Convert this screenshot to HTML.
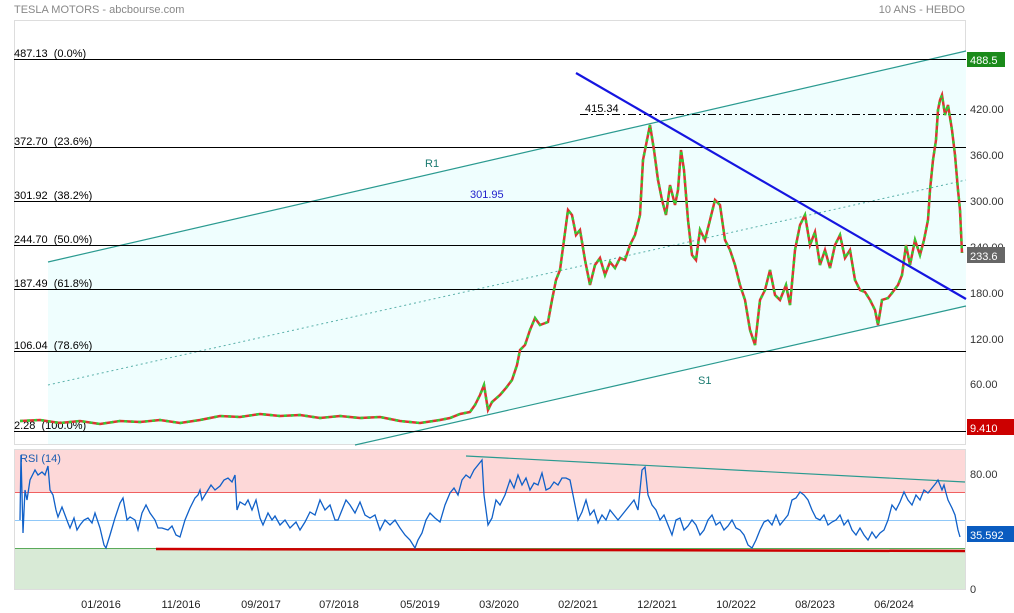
<!DOCTYPE html>
<html><head><meta charset="utf-8"><style>
body{margin:0;background:#fff;width:1014px;height:613px;overflow:hidden;font-family:"Liberation Sans",sans-serif}
svg{position:absolute;left:0;top:0}
text{font-family:"Liberation Sans",sans-serif;font-size:11px;white-space:pre}
</style></head><body>
<svg width="1014" height="613" viewBox="0 0 1014 613" xml:space="preserve">
<text x="14" y="13" fill="#888" font-size="12">TESLA MOTORS - abcbourse.com</text>
<text x="965" y="13" fill="#888" font-size="12" text-anchor="end">10 ANS - HEBDO</text>
<rect x="14.5" y="20.5" width="951" height="424" fill="#fff" stroke="#ddd"/>
<polygon points="48,262 966,51 966,306 355,444 48,444" fill="#effefe"/>
<line x1="48" y1="262" x2="966" y2="51" stroke="#2a9a90" stroke-width="1.2"/>
<line x1="355" y1="445" x2="966" y2="306" stroke="#2a9a90" stroke-width="1.2"/>
<line x1="48" y1="385" x2="966" y2="180" stroke="#5ab0aa" stroke-width="1" stroke-dasharray="2,3"/>
<g stroke="#000" stroke-width="1">
<line x1="14" y1="59.5" x2="966" y2="59.5"/>
<line x1="14" y1="147.5" x2="966" y2="147.5"/>
<line x1="14" y1="201.5" x2="966" y2="201.5"/>
<line x1="14" y1="245.5" x2="966" y2="245.5"/>
<line x1="14" y1="289.5" x2="966" y2="289.5"/>
<line x1="14" y1="351.5" x2="966" y2="351.5"/>
<line x1="14" y1="431.5" x2="966" y2="431.5"/>
<line x1="580" y1="114.5" x2="966" y2="114.5" stroke-dasharray="8,3,2,3"/>
</g>
<g fill="#000">
<text x="14" y="57">487.13  (0.0%)</text>
<text x="14" y="145">372.70  (23.6%)</text>
<text x="14" y="199">301.92  (38.2%)</text>
<text x="14" y="243">244.70  (50.0%)</text>
<text x="14" y="287">187.49  (61.8%)</text>
<text x="14" y="349">106.04  (78.6%)</text>
<text x="14" y="429">2.28  (100.0%)</text>
<text x="585" y="112">415.34</text>
</g>
<text x="425" y="167" fill="#1a7a70" font-size="13">R1</text>
<text x="698" y="384" fill="#1a7a70" font-size="13">S1</text>
<text x="470" y="198" fill="#2222cc">301.95</text>
<polyline fill="none" stroke="#d33" stroke-width="2.5" points="20,421 40,420 60,423 80,421 100,424 120,421 140,422 160,420 180,423 200,420 220,416 240,417 260,414 280,416 300,415 320,418 340,416 360,418 380,417 400,421 420,423 440,420 450,418 460,414 470,412 475,405 480,395 484,385 488,410 492,402 500,395 506,388 512,380 517,365 520,350 525,345 530,330 535,318 540,325 548,322 552,300 556,280 560,270 564,240 568,210 572,215 576,235 580,230 585,260 590,285 595,265 600,258 605,275 610,262 615,268 620,258 625,260 630,245 635,235 640,215 643,160 646,145 650,125 654,150 658,180 662,200 666,215 670,185 675,205 678,190 681,150 684,170 688,220 692,255 696,260 700,230 705,240 710,220 715,200 720,205 725,240 730,250 735,265 740,285 745,300 750,330 755,345 760,300 765,290 770,270 775,295 780,300 786,285 790,305 795,250 800,225 805,215 810,245 815,232 820,265 825,250 830,268 835,245 840,235 845,258 850,250 855,280 860,290 865,292 870,300 875,310 878,325 882,300 888,298 892,293 898,285 902,275 906,245 910,265 915,240 920,255 924,240 928,220 930,190 933,160 936,140 938,110 940,100 942,95 945,115 948,105 952,130 955,155 958,190 960,210 962,253"/>
<polyline fill="none" stroke="#3c3" stroke-width="2.5" stroke-dasharray="3,4" points="20,421 40,420 60,423 80,421 100,424 120,421 140,422 160,420 180,423 200,420 220,416 240,417 260,414 280,416 300,415 320,418 340,416 360,418 380,417 400,421 420,423 440,420 450,418 460,414 470,412 475,405 480,395 484,385 488,410 492,402 500,395 506,388 512,380 517,365 520,350 525,345 530,330 535,318 540,325 548,322 552,300 556,280 560,270 564,240 568,210 572,215 576,235 580,230 585,260 590,285 595,265 600,258 605,275 610,262 615,268 620,258 625,260 630,245 635,235 640,215 643,160 646,145 650,125 654,150 658,180 662,200 666,215 670,185 675,205 678,190 681,150 684,170 688,220 692,255 696,260 700,230 705,240 710,220 715,200 720,205 725,240 730,250 735,265 740,285 745,300 750,330 755,345 760,300 765,290 770,270 775,295 780,300 786,285 790,305 795,250 800,225 805,215 810,245 815,232 820,265 825,250 830,268 835,245 840,235 845,258 850,250 855,280 860,290 865,292 870,300 875,310 878,325 882,300 888,298 892,293 898,285 902,275 906,245 910,265 915,240 920,255 924,240 928,220 930,190 933,160 936,140 938,110 940,100 942,95 945,115 948,105 952,130 955,155 958,190 960,210 962,253"/>
<line x1="576" y1="73" x2="966" y2="299" stroke="#1515e0" stroke-width="2.2"/>
<g fill="#333" font-size="11">
<text x="970" y="113">420.00</text><text x="970" y="159">360.00</text><text x="970" y="205">300.00</text>
<text x="970" y="251">240.00</text><text x="970" y="297">180.00</text><text x="970" y="343">120.00</text><text x="970" y="388">60.00</text>
<text x="970" y="478">80.00</text><text x="970" y="593">0</text>
</g>
<rect x="967" y="52" width="38" height="15" fill="#1a8a1a"/><text x="970" y="64" fill="#fff" font-size="12">488.5</text>
<rect x="967" y="247" width="38" height="16" fill="#666"/><text x="970" y="260" fill="#fff" font-size="12">233.6</text>
<rect x="967" y="419" width="48" height="16" fill="#c00"/><text x="970" y="432" fill="#fff" font-size="12">9.410</text>
<rect x="967" y="526" width="48" height="16" fill="#0a5cc0"/><text x="970" y="539" fill="#fff" font-size="12">35.592</text>
<rect x="14.5" y="449.5" width="951" height="140" fill="#fff" stroke="#ddd"/>
<rect x="15" y="450" width="950" height="42" fill="#fdd8d8"/>
<rect x="15" y="548" width="950" height="41" fill="#d8ead6"/>
<line x1="15" y1="492.5" x2="965" y2="492.5" stroke="#f06060"/>
<line x1="15" y1="520.5" x2="965" y2="520.5" stroke="#90c8f8"/>
<line x1="15" y1="548.5" x2="965" y2="548.5" stroke="#5aaa5a"/>
<line x1="156" y1="549" x2="965" y2="551" stroke="#c00" stroke-width="2.5"/>
<line x1="466" y1="456" x2="965" y2="482" stroke="#2a9a90" stroke-width="1.2"/>
<text x="20" y="462" fill="#1a5cb0" font-size="12">RSI (14)</text>
<polyline fill="none" stroke="#1060c8" stroke-width="1.3" points="20,520 21,455 23,533 25,490 27,500 30,480 35,470 38,475 42,472 45,475 48,466 50,490 53,495 56,510 58,517 62,507 65,515 68,523 70,528 74,518 77,530 80,525 84,520 88,518 92,523 95,513 100,528 104,545 106,548 110,535 115,518 120,503 123,498 127,520 130,517 135,520 138,530 142,513 146,505 150,513 155,520 158,528 162,528 168,530 172,526 176,535 180,537 185,520 190,508 195,498 198,495 200,490 202,500 205,495 208,490 211,485 215,490 220,486 224,480 228,478 232,482 235,475 237,510 240,502 245,505 248,500 252,510 256,500 260,518 263,525 268,513 272,520 275,516 280,525 285,520 290,528 296,522 300,530 305,522 310,512 315,515 320,500 325,510 330,505 335,520 338,520 342,510 346,500 350,505 355,513 360,502 365,515 370,518 375,515 380,530 385,520 390,525 395,520 400,528 405,535 410,540 415,548 418,540 422,533 426,520 430,513 435,518 440,522 445,505 450,493 454,488 458,495 462,480 466,475 470,478 474,470 478,465 482,460 484,495 488,525 492,518 496,500 500,505 505,495 510,480 514,488 518,475 522,485 526,478 530,490 534,483 538,485 542,473 546,490 550,488 554,482 558,485 562,478 566,478 570,480 574,500 578,520 582,512 586,500 590,515 594,510 598,523 602,515 606,520 610,510 614,515 618,520 622,515 626,510 630,505 634,500 638,510 642,470 645,467 648,495 652,505 656,510 660,520 664,515 668,525 672,535 676,520 680,518 684,530 688,526 692,520 696,525 700,535 704,530 708,520 712,515 716,525 720,522 724,530 728,526 732,520 736,528 740,530 744,535 748,545 752,548 756,540 760,530 764,522 768,520 772,525 776,515 780,525 784,520 788,515 792,500 796,498 800,492 804,495 808,500 812,510 816,518 820,520 824,515 828,525 832,522 836,520 840,515 844,525 848,520 852,530 856,535 860,528 864,535 868,540 872,532 876,538 880,533 884,530 888,520 892,505 896,510 900,502 904,492 908,500 912,505 916,495 920,500 924,490 928,493 932,488 936,483 938,480 940,485 942,490 944,485 946,493 948,500 952,508 955,515 958,530 960,537"/>
<g fill="#222" font-size="11" text-anchor="middle">
<text x="101" y="608">01/2016</text><text x="181" y="608">11/2016</text><text x="261" y="608">09/2017</text>
<text x="339" y="608">07/2018</text><text x="420" y="608">05/2019</text><text x="499" y="608">03/2020</text>
<text x="578" y="608">02/2021</text><text x="657" y="608">12/2021</text><text x="736" y="608">10/2022</text>
<text x="815" y="608">08/2023</text><text x="894" y="608">06/2024</text>
</g>
</svg>
</body></html>
